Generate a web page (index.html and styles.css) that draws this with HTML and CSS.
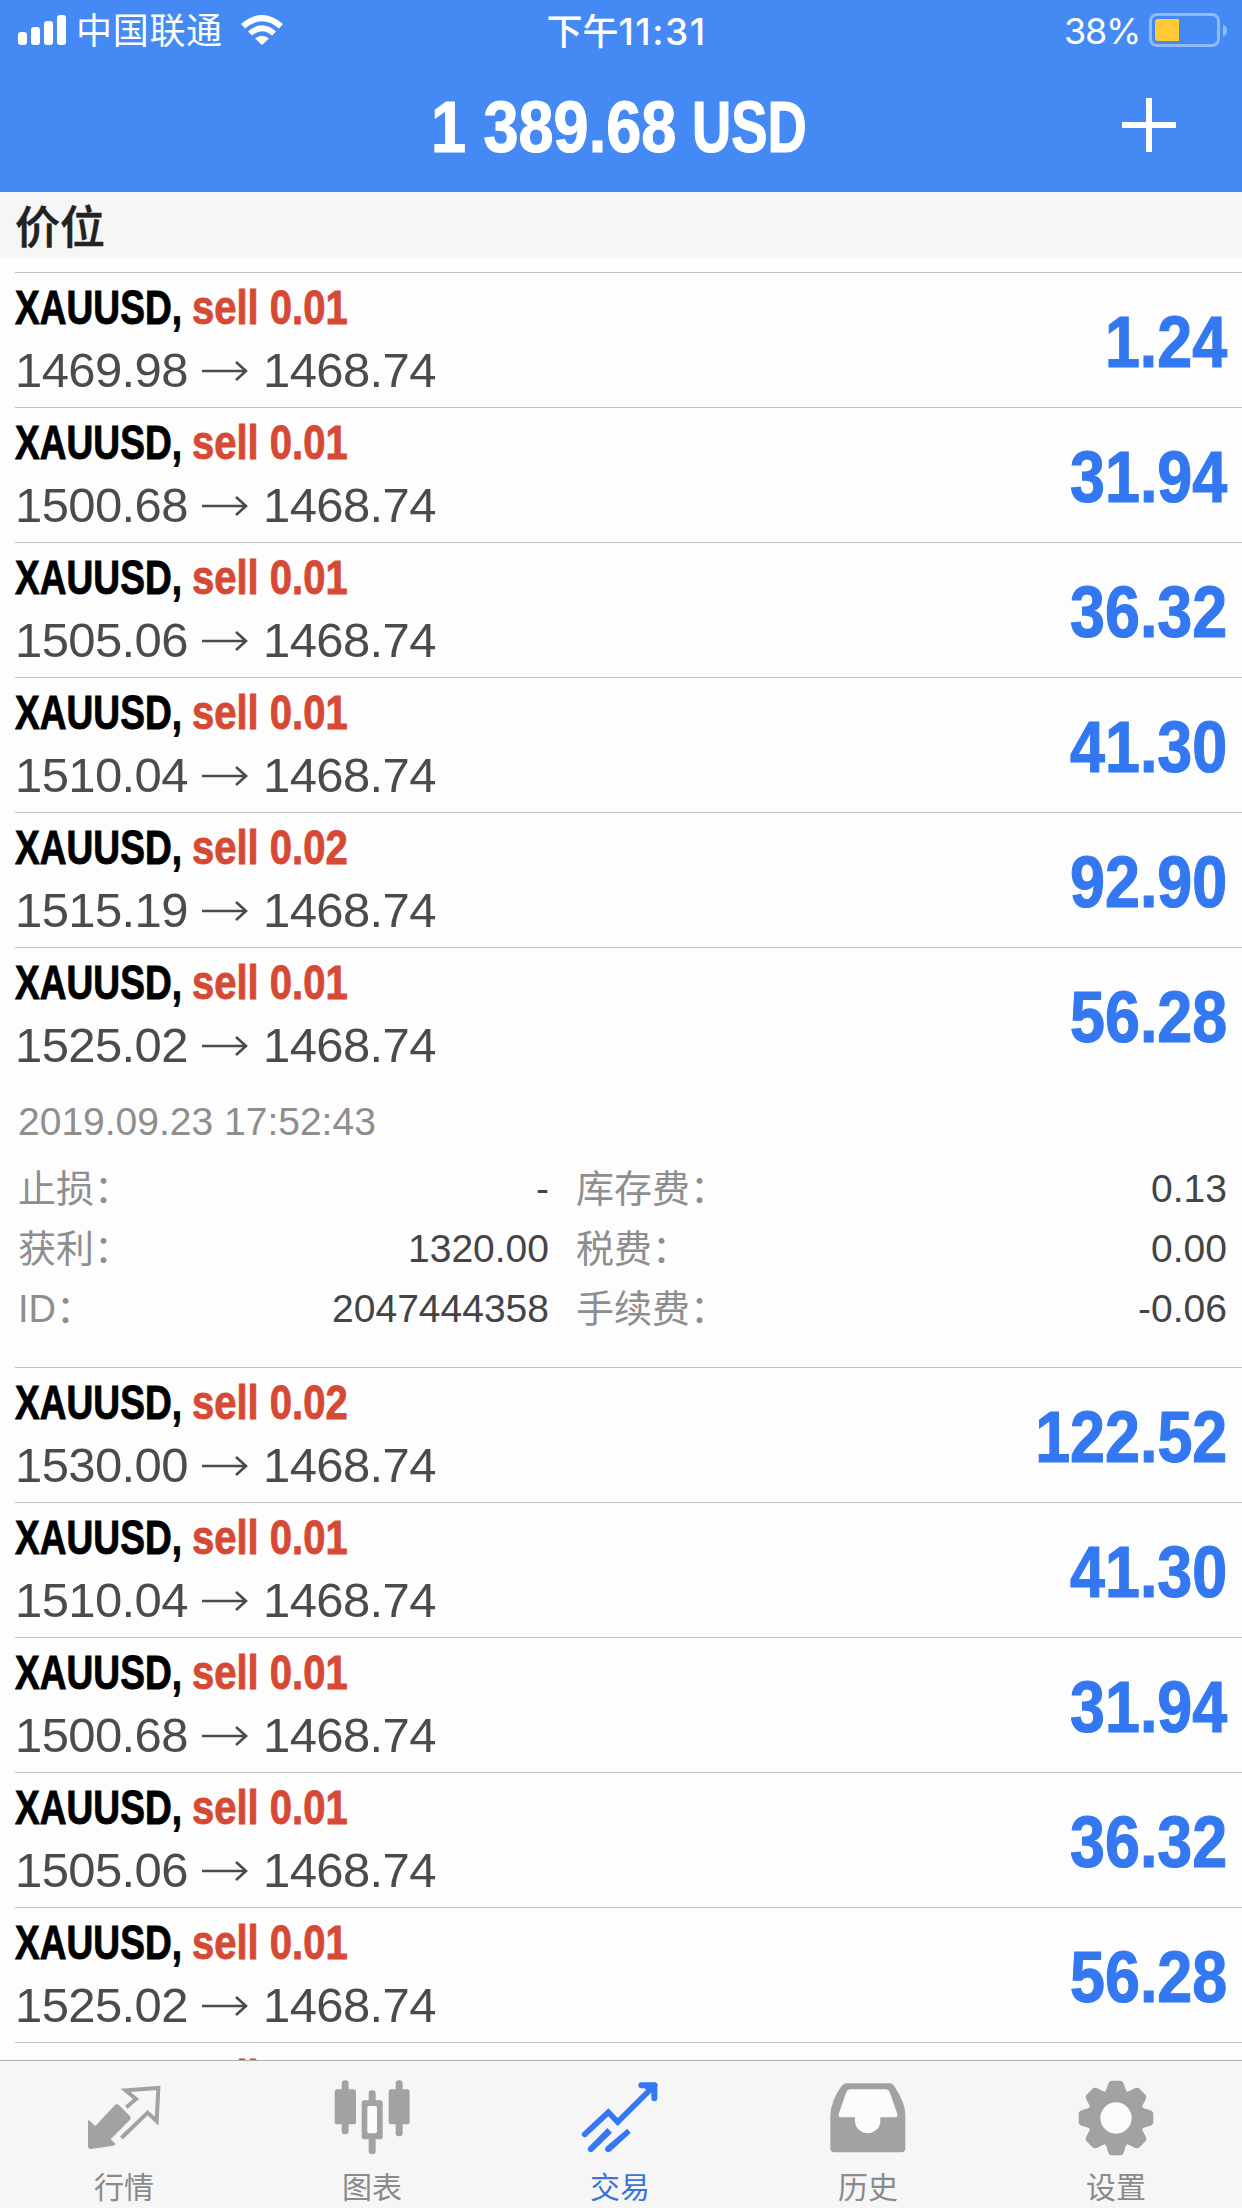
FILE: index.html
```html
<!DOCTYPE html>
<html lang="zh-CN">
<head>
<meta charset="utf-8">
<title>交易</title>
<link rel="stylesheet" href="styles.css">
</head>
<body>
<div class="app">
  <header class="header">
    <div class="status">
      <div class="status-left">
        <svg class="signal" width="48" height="30" viewBox="0 0 48 30"><rect x="0" y="17" width="9" height="13" rx="3"/><rect x="13" y="12" width="9" height="18" rx="3"/><rect x="26" y="6" width="9" height="24" rx="3"/><rect x="39" y="0" width="9" height="30" rx="3"/></svg>
        <span class="carrier">中国联通</span>
        <svg class="wifi" width="42" height="30" viewBox="0 0 42 30"><path d="M0 9Q21-9 42 9L38 13.500Q21-1 4 13.500ZM7 16.500Q21 4 35 16.500L31 20.500Q21 12 11 20.500ZM14 23.500Q21 18 28 23.500L21 30Z"/></svg>
      </div>
      <div class="clock">下午<span class="clock-digits">11:31</span></div>
      <div class="status-right">
        <span class="percent">38%</span>
        <svg class="battery" width="80" height="36" viewBox="0 0 80 36"><rect x="1.500" y="1.500" width="68" height="31" rx="6.500" fill="none" stroke="#8fbbfa" stroke-width="3"/><path d="M74 11.500q4 1.500 4 6t-4 6z" fill="#8fbbfa"/><path d="M9 6H30V28H9a3 3 0 0 1-3-3V9a3 3 0 0 1 3-3Z" fill="#ffca33"/></svg>
      </div>
    </div>
    <div class="nav">
      <h1 class="balance"><span class="balance-value">1 389.68</span><span class="balance-unit">USD</span></h1>
      <svg class="add" width="54" height="54" viewBox="0 0 54 54"><path d="M27 0V54M0 27H54" stroke="#fff" stroke-width="6"/></svg>
    </div>
  </header>
  <div class="section">价位</div>
  <main class="list" id="list"></main>
  <nav class="tabs">
    <div class="tab">
      <svg class="tab-icon" viewBox="249 170 240 240"><path d="M342 254q6-5 12 0l33 34q4 5 0 10l-58 59 14 13q0 5-6 6l-68 10q-8 0-8-8v-78q5 0 8 4l14 13z"/><path d="M376 261l29-25-31-26 98-7-5 99-27-25-79 76" fill="none" stroke="#a2a2a2" stroke-width="12"/></svg>
      <span>行情</span>
    </div>
    <div class="tab">
      <svg class="tab-icon" viewBox="997 170 240 240"><rect x="1026" y="180" width="21" height="162" rx="10"/><rect x="1005" y="207" width="64" height="105" rx="8"/><rect x="1188" y="180" width="21" height="168" rx="10"/><rect x="1167" y="207" width="63" height="105" rx="8"/><rect x="1107" y="210" width="21" height="192" rx="10"/><rect x="1086" y="240" width="63" height="117" rx="8"/><rect x="1103" y="257" width="29" height="82" rx="6" fill="#fcfcfc"/></svg>
      <span>图表</span>
    </div>
    <div class="tab tab-active">
      <svg class="tab-icon" viewBox="479 170 240 240"><path d="M493 342L564 276 592 305 703 195" fill="none" stroke="#3478f6" stroke-width="17" stroke-linecap="round"/><path d="M663 186h39q9 0 9 9v39q0 9-9 9t-9-9v-20h-10l-10-10h-10q-9 0-9-9t9-9z"/><path d="M561 323l14 14-57 56q-7 6-13 0t0-13zM621 325l10 13-60 55q-8 6-14 0t0-14z"/></svg>
      <span>交易</span>
    </div>
    <div class="tab">
      <svg class="tab-icon" viewBox="17 170 240 240"><path d="M72 189H203q8 0 13 9Q249 247 249 285V384q0 12-12 12H36q-12 0-12-12V285Q26 239 58 197q5-8 14-8z"/><path d="M85 207H190q9 0 12 8l23 66q2 10-6 10H174v10a38 38 0 0 1-76 0v-10H55q-8 0-6-10l23-66q3-8 13-8z" fill="#fcfcfc"/></svg>
      <span>历史</span>
    </div>
    <div class="tab">
      <svg class="tab-icon" viewBox="-120 -123 240 240"><circle r="83"/><path id="tooth" d="M-34-76Q-28-84-25-98Q-22-112-12-112H12Q22-112 25-98Q28-84 34-76L30-50H-30Z"/><use href="#tooth" transform="rotate(45)"/><use href="#tooth" transform="rotate(90)"/><use href="#tooth" transform="rotate(135)"/><use href="#tooth" transform="rotate(180)"/><use href="#tooth" transform="rotate(225)"/><use href="#tooth" transform="rotate(270)"/><use href="#tooth" transform="rotate(315)"/><circle r="47" fill="#fcfcfc"/></svg>
      <span>设置</span>
    </div>
  </nav>
</div>
<script src="app.js"></script>
</body>
</html>
```

FILE: styles.css
```css
* { box-sizing: border-box; }
body {
  margin: 0;
  background: #fdfdfd;
  font-family: "Liberation Sans", "Noto Sans CJK SC", sans-serif;
}
svg { display: block; flex: none; }
.app {
  width: 1242px;
  height: 2208px;
  display: flex;
  flex-direction: column;
  overflow: hidden;
}
.header {
  flex: none;
  height: 192px;
  background: #458af4;
  color: #fff;
}
.status {
  height: 60px;
  display: grid;
  grid-template-columns: 1fr auto 1fr;
  padding: 0 13px 0 18px;
  font: 36px/63px Inter, "Noto Sans CJK SC", sans-serif;
}
.status-left, .status-right { display: flex; }
.status-right { justify-content: flex-end; }
.signal, .wifi { fill: #fff; margin-top: 15px; }
.carrier { margin: 0 18px 0 10px; letter-spacing: .7px; }
.clock { font-weight: 500; padding-left: 6px; }
.clock-digits { font-size: 37px; letter-spacing: 1.500px; }
.percent { margin-right: 9px; letter-spacing: -1.3px; }
.battery { margin-top: 13px; }
.nav {
  display: grid;
  grid-template-columns: 1fr auto 1fr;
  height: 132px;
  padding-right: 66px;
}
.balance {
  grid-column: 2;
  display: flex;
  margin: 20px 0 0 62px;
  font-size: 72px;
  line-height: 95px;
  white-space: nowrap;
  -webkit-text-stroke: 1.2px;
}
.balance-value {
  width: 261px;
  transform: scaleX(.875);
  transform-origin: left;
}
.balance-unit {
  width: 116px;
  transform: scaleX(.755);
  transform-origin: left;
}
.add { justify-self: end; margin-top: 38px; }
.section {
  flex: none;
  height: 66px;
  margin-bottom: 14px;
  padding-left: 15px;
  background: #f6f6f6;
  color: #222;
  font: 500 45px/66px "Noto Sans CJK SC", sans-serif;
  -webkit-text-stroke: .5px;
}
.list {
  flex: 1;
  min-height: 0;
  padding-left: 15px;
  overflow: hidden;
}
.position { border-top: 1px solid #c4c4c6; }
.summary {
  height: 134px;
  display: flex;
  justify-content: space-between;
  padding-right: 15px;
}
.deal {
  display: flex;
  padding-top: 8px;
  font-size: 48.500px;
  font-weight: bold;
  line-height: 53px;
  white-space: nowrap;
  -webkit-text-stroke: .9px;
}
.symbol {
  width: 177px;
  color: #000;
  transform: scaleX(.765);
  transform-origin: left;
}
.side {
  color: #d64a35;
  transform: scaleX(.825);
  transform-origin: left;
}
.prices {
  display: flex;
  margin-top: 9px;
  color: #4b4b4d;
  font-size: 49px;
  letter-spacing: -.6px;
  line-height: 54px;
}
.open { width: 187px; }
.arrow { margin: 17px 15px 0 0; }
.profit {
  padding-top: 29px;
  color: #3478f1;
  font-size: 72px;
  font-weight: bold;
  line-height: 81px;
  transform: scaleX(.872);
  transform-origin: right;
  -webkit-text-stroke: 1.2px;
}
.details {
  height: 285px;
  padding: 10px 15px 0 3px;
  color: #8e8e8e;
  font-size: 39px;
  line-height: 60px;
}
.fields {
  display: grid;
  grid-template-columns: 88px 443px 119px 1fr;
  grid-auto-rows: 60px;
  margin-top: 7px;
  white-space: nowrap;
}
.label { font-size: 38px; }
.label-right { padding-left: 27px; }
.value { color: #444; text-align: right; }
.tabs {
  flex: none;
  height: 148px;
  display: grid;
  grid-template-columns: repeat(5, 1fr);
  padding: 16px 2px 0 0;
  border-top: 1px solid #b0b0b0;
  background: #f6f6f6;
}
.tab {
  display: flex;
  flex-direction: column;
  align-items: center;
  color: #8a8a8a;
  fill: #a2a2a2;
  font: 30px/44px "Noto Sans CJK SC", sans-serif;
}
.tab-active { color: #3b74d8; fill: #3478f6; }
.tab-icon { width: 80px; height: 80px; margin-bottom: 6px; }
```

FILE: app.js
```js
const positions = [
  ["0.01", "1469.98", "1.24"],
  ["0.01", "1500.68", "31.94"],
  ["0.01", "1505.06", "36.32"],
  ["0.01", "1510.04", "41.30"],
  ["0.02", "1515.19", "92.90"],
  ["0.01", "1525.02", "56.28", true],
  ["0.02", "1530.00", "122.52"],
  ["0.01", "1510.04", "41.30"],
  ["0.01", "1500.68", "31.94"],
  ["0.01", "1505.06", "36.32"],
  ["0.01", "1525.02", "56.28"],
  ["0.01", "1530.00", "61.26"]
];

const details = `
  <div class="details">
    <div>2019.09.23 17:52:43</div>
    <div class="fields">
      <span class="label">止损：</span><span class="value">-</span>
      <span class="label label-right">库存费：</span><span class="value">0.13</span>
      <span class="label">获利：</span><span class="value">1320.00</span>
      <span class="label label-right">税费：</span><span class="value">0.00</span>
      <span class="label">ID：</span><span class="value">2047444358</span>
      <span class="label label-right">手续费：</span><span class="value">-0.06</span>
    </div>
  </div>`;

const arrow = '<svg class="arrow" width="46" height="22" viewBox="0 0 46 22"><path d="M0 11H44M34 2L44 11L34 20" fill="none" stroke="#4b4b4d" stroke-width="2.6"/></svg>';

document.getElementById("list").innerHTML = positions.map(([lot, open, profit, expanded]) => `
  <section class="position">
    <div class="summary">
      <div>
        <div class="deal"><span class="symbol">XAUUSD,</span><span class="side">sell ${lot}</span></div>
        <div class="prices"><span class="open">${open}</span>${arrow}<span>1468.74</span></div>
      </div>
      <div class="profit">${profit}</div>
    </div>${expanded ? details : ""}
  </section>`).join("");
```
